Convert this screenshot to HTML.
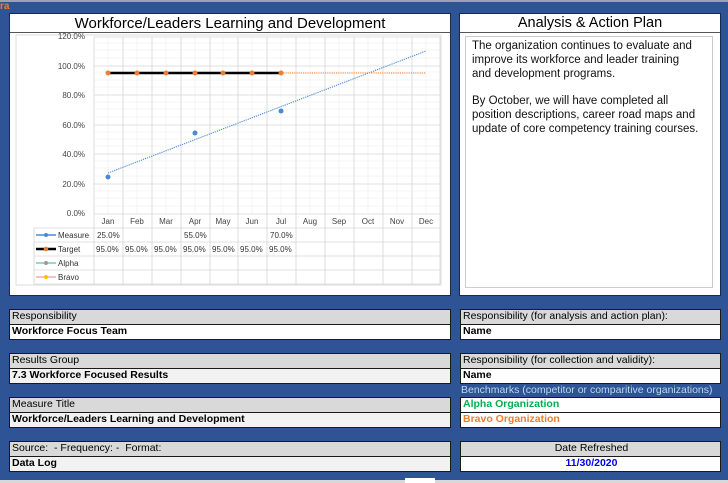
<!DOCTYPE html>
<html><head><style>
*{margin:0;padding:0;box-sizing:border-box}
body{width:728px;height:483px;background:#2E5496;position:relative;overflow:hidden;font-family:"Liberation Sans",sans-serif}
.a{position:absolute}
.h{position:absolute;background:#D9D9D9;border:1px solid #1a1a1a;font-size:10.5px;line-height:13px;padding-left:2px;color:#000}
.v{position:absolute;background:#fff;border:1px solid #1a1a1a;font-size:10.5px;line-height:13px;padding-left:2px;font-weight:bold;color:#000}
.g{background:#F2F2F2}
</style></head><body>
<div class="a" style="left:0;top:0;width:728px;height:2px;background:#9aa3b0"></div>
<div class="a" style="left:0;top:1px;font-size:10px;color:#ED7D31;font-weight:bold">ra</div>
<div class="a" style="left:9px;top:13px;width:442px;height:283px;background:#fff;border:1px solid #1a2a4a"></div>
<div class="a" style="left:9px;top:14px;width:442px;height:19px;text-align:center;font-size:15px;line-height:19px;color:#000">Workforce/Leaders Learning and Development</div>
<div class="a" style="left:10px;top:32px;width:440px;height:1px;background:#555"></div>
<svg class="a" style="left:0;top:0" width="460" height="300" font-family="Liberation Sans" font-size="8" fill="#444">
<rect x="16" y="35" width="425" height="250" fill="none" stroke="#ddd"/>
<g stroke="#ececec" stroke-width="0.6">
<line x1="94" x2="440" y1="43" y2="43"/><line x1="94" x2="440" y1="50" y2="50"/><line x1="94" x2="440" y1="58" y2="58"/>
<line x1="94" x2="440" y1="72" y2="72"/><line x1="94" x2="440" y1="80" y2="80"/><line x1="94" x2="440" y1="87" y2="87"/>
<line x1="94" x2="440" y1="102" y2="102"/><line x1="94" x2="440" y1="109" y2="109"/><line x1="94" x2="440" y1="117" y2="117"/>
<line x1="94" x2="440" y1="132" y2="132"/><line x1="94" x2="440" y1="139" y2="139"/><line x1="94" x2="440" y1="146" y2="146"/>
<line x1="94" x2="440" y1="161" y2="161"/><line x1="94" x2="440" y1="168" y2="168"/><line x1="94" x2="440" y1="176" y2="176"/>
<line x1="94" x2="440" y1="191" y2="191"/><line x1="94" x2="440" y1="198" y2="198"/><line x1="94" x2="440" y1="206" y2="206"/>
<line x1="108" x2="108" y1="37" y2="214"/><line x1="137" x2="137" y1="37" y2="214"/><line x1="166" x2="166" y1="37" y2="214"/><line x1="195" x2="195" y1="37" y2="214"/><line x1="223" x2="223" y1="37" y2="214"/><line x1="252" x2="252" y1="37" y2="214"/><line x1="281" x2="281" y1="37" y2="214"/><line x1="310" x2="310" y1="37" y2="214"/><line x1="339" x2="339" y1="37" y2="214"/><line x1="368" x2="368" y1="37" y2="214"/><line x1="397" x2="397" y1="37" y2="214"/><line x1="426" x2="426" y1="37" y2="214"/>
</g>
<g stroke="#d6d6d6" stroke-width="0.8">
<line x1="94" x2="440" y1="37" y2="37"/><line x1="94" x2="440" y1="66" y2="66"/><line x1="94" x2="440" y1="95" y2="95"/><line x1="94" x2="440" y1="125" y2="125"/><line x1="94" x2="440" y1="154" y2="154"/><line x1="94" x2="440" y1="184" y2="184"/>
<line x1="94" x2="94" y1="37" y2="284"/><line x1="123" x2="123" y1="37" y2="284"/><line x1="152" x2="152" y1="37" y2="284"/><line x1="181" x2="181" y1="37" y2="284"/><line x1="210" x2="210" y1="37" y2="284"/><line x1="238" x2="238" y1="37" y2="284"/><line x1="267" x2="267" y1="37" y2="284"/><line x1="296" x2="296" y1="37" y2="284"/><line x1="325" x2="325" y1="37" y2="284"/><line x1="354" x2="354" y1="37" y2="284"/><line x1="383" x2="383" y1="37" y2="284"/><line x1="412" x2="412" y1="37" y2="284"/><line x1="440" x2="440" y1="37" y2="284"/>
<line x1="94" x2="440" y1="214" y2="214"/><line x1="34" x2="440" y1="228" y2="228"/><line x1="34" x2="440" y1="242" y2="242"/><line x1="34" x2="440" y1="256" y2="256"/><line x1="34" x2="440" y1="270" y2="270"/><line x1="34" x2="440" y1="284" y2="284"/><line x1="34" x2="34" y1="228" y2="284"/>
</g>
<g text-anchor="end"><text x="85" y="39">120.0%</text><text x="85" y="69">100.0%</text><text x="85" y="98">80.0%</text><text x="85" y="128">60.0%</text><text x="85" y="157">40.0%</text><text x="85" y="187">20.0%</text><text x="85" y="216">0.0%</text></g>
<g text-anchor="middle"><text x="108" y="224">Jan</text><text x="137" y="224">Feb</text><text x="166" y="224">Mar</text><text x="195" y="224">Apr</text><text x="223" y="224">May</text><text x="252" y="224">Jun</text><text x="281" y="224">Jul</text><text x="310" y="224">Aug</text><text x="339" y="224">Sep</text><text x="368" y="224">Oct</text><text x="397" y="224">Nov</text><text x="426" y="224">Dec</text></g>
<g fill="#333"><text x="97" y="238">25.0%</text><text x="184" y="238">55.0%</text><text x="270" y="238">70.0%</text>
<text x="96" y="252">95.0%</text><text x="125" y="252">95.0%</text><text x="154" y="252">95.0%</text><text x="183" y="252">95.0%</text><text x="212" y="252">95.0%</text><text x="240" y="252">95.0%</text><text x="269" y="252">95.0%</text>
<text x="58" y="238">Measure</text><text x="58" y="252">Target</text><text x="58" y="266">Alpha</text><text x="58" y="280">Bravo</text></g>
<line x1="36" x2="56" y1="235" y2="235" stroke="#4A8AD4" stroke-width="1.5"/><circle cx="46" cy="235" r="2" fill="#4A8AD4"/>
<line x1="36" x2="56" y1="249" y2="249" stroke="#000" stroke-width="2.5"/><circle cx="46" cy="249" r="2.3" fill="#ED7D31"/>
<line x1="36" x2="56" y1="263" y2="263" stroke="#3CB371" stroke-width="1"/><circle cx="46" cy="263" r="2" fill="#999"/>
<line x1="36" x2="56" y1="277" y2="277" stroke="#F08080" stroke-width="1"/><circle cx="46" cy="277" r="2" fill="#FFC000"/>
<line x1="108" y1="173" x2="426" y2="51" stroke="#4A8AD4" stroke-width="1.1" stroke-dasharray="1.2 1"/>
<line x1="281" y1="73" x2="426" y2="73" stroke="#ED7D31" stroke-width="1.1" stroke-dasharray="1.2 1"/>
<line x1="108" y1="73" x2="281" y2="73" stroke="#000" stroke-width="2.5"/>
<g fill="#ED7D31"><circle cx="108" cy="73" r="2.5"/><circle cx="137" cy="73" r="2.5"/><circle cx="166" cy="73" r="2.5"/><circle cx="195" cy="73" r="2.5"/><circle cx="223" cy="73" r="2.5"/><circle cx="252" cy="73" r="2.5"/><circle cx="281" cy="73" r="2.5"/></g>
<g fill="#4A8AD4"><circle cx="108" cy="177" r="2.5"/><circle cx="195" cy="133" r="2.5"/><circle cx="281" cy="111" r="2.5"/></g>
</svg>
<div class="a" style="left:459px;top:13px;width:262px;height:283px;background:#fff;border:1px solid #1a2a4a"></div>
<div class="a" style="left:459px;top:14px;width:262px;height:19px;text-align:center;font-size:14.5px;line-height:19px;color:#000">Analysis &amp; Action Plan</div>
<div class="a" style="left:460px;top:32px;width:260px;height:1px;background:#555"></div>
<div class="a" style="left:465px;top:36px;width:248px;height:252px;border:1px solid #ccc"></div>
<div class="a" style="left:472px;top:40px;white-space:nowrap;font-size:11.5px;line-height:13.8px;color:#111">The organization continues to evaluate and<br>improve its workforce and leader training<br>and development programs.<br><br>By October, we will have completed all<br>position descriptions, career road maps and<br>update of core competency training courses.</div>
<div class="h" style="left:9px;top:309px;width:442px;height:16px">Responsibility</div>
<div class="v" style="left:9px;top:324px;width:442px;height:16px">Workforce Focus Team</div>
<div class="h" style="left:9px;top:353px;width:442px;height:16px">Results Group</div>
<div class="v g" style="left:9px;top:368px;width:442px;height:16px">7.3 Workforce Focused Results</div>
<div class="h" style="left:9px;top:397px;width:442px;height:16px">Measure Title</div>
<div class="v g" style="left:9px;top:412px;width:442px;height:16px">Workforce/Leaders Learning and Development</div>
<div class="h" style="left:9px;top:441px;width:442px;height:16px">Source:&nbsp; - Frequency: -&nbsp; Format:</div>
<div class="v g" style="left:9px;top:456px;width:442px;height:16px">Data Log</div>
<div class="h" style="left:460px;top:309px;width:261px;height:16px">Responsibility (for analysis and action plan):</div>
<div class="v" style="left:460px;top:324px;width:261px;height:16px">Name</div>
<div class="h" style="left:460px;top:353px;width:261px;height:16px">Responsibility (for collection and validity):</div>
<div class="v" style="left:460px;top:368px;width:261px;height:16px">Name</div>
<div class="a" style="left:461px;top:384px;font-size:10.5px;color:#BDD7EE">Benchmarks (competitor or comparitive organizations)</div>
<div class="v" style="left:460px;top:397px;width:261px;height:16px;color:#00B050">Alpha Organization</div>
<div class="v" style="left:460px;top:412px;width:261px;height:16px;color:#ED7D31">Bravo Organization</div>
<div class="h" style="left:460px;top:441px;width:261px;height:16px;text-align:center">Date Refreshed</div>
<div class="v" style="left:460px;top:456px;width:261px;height:16px;text-align:center;color:#0000EE">11/30/2020</div>
<div class="a" style="left:0;top:480px;width:728px;height:3px;background:#d8d8d8"></div>
<div class="a" style="left:405px;top:478px;width:30px;height:5px;background:#fff"></div>
</body></html>
